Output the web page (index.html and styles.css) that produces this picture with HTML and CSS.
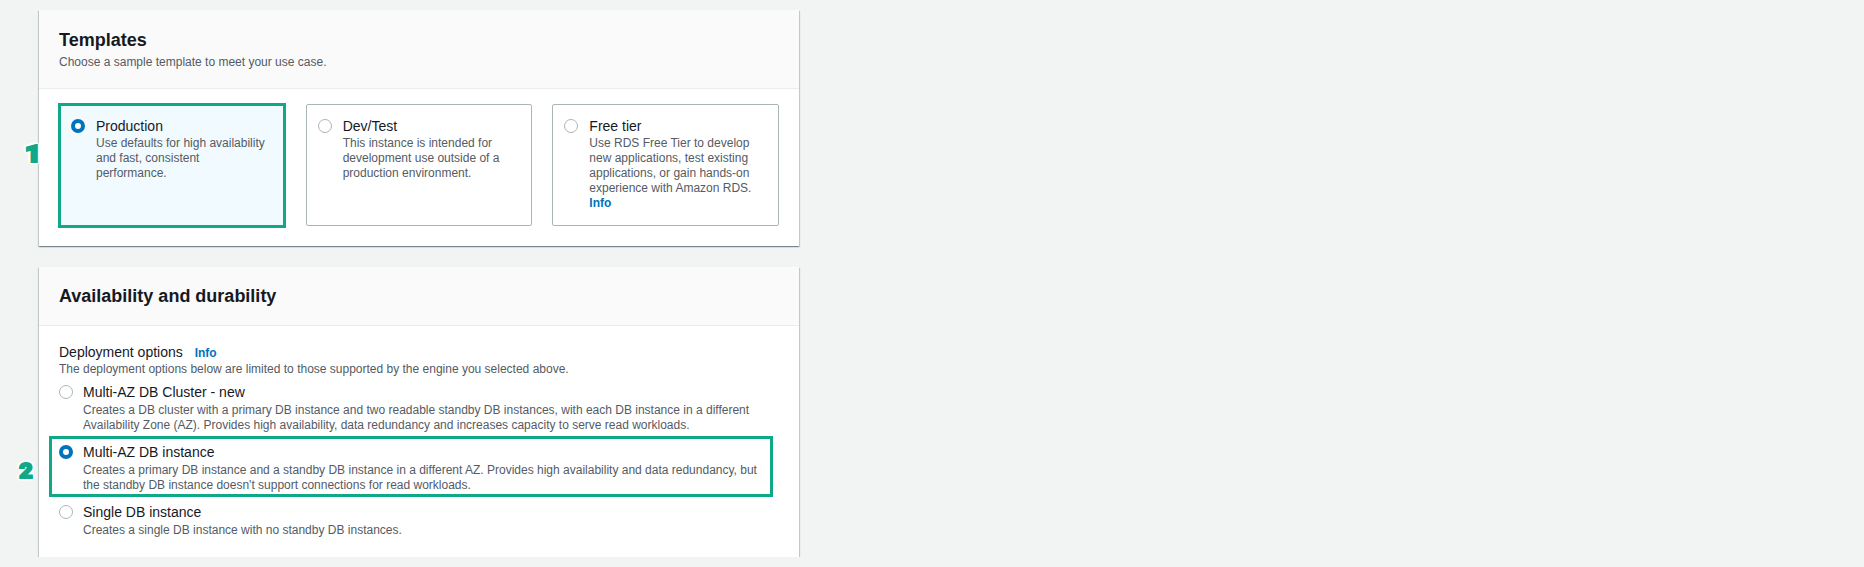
FILE: index.html
```html
<!DOCTYPE html>
<html lang="en">
<head>
<meta charset="utf-8">
<title>Templates</title>
<link rel="stylesheet" href="styles.css">
</head>
<body>
<main class="page">
  <section class="panel">
    <header class="panel-head">
      <h2 class="panel-title">Templates</h2>
      <p class="panel-sub">Choose a sample template to meet your use case.</p>
    </header>
    <div class="panel-body tiles-body">
      <div class="tiles">
        <div class="tile selected">
          <span class="radio on"></span>
          <div class="tile-text">
            <div class="label">Production</div>
            <div class="desc">Use defaults for high availability and fast, consistent performance.</div>
          </div>
          <span class="mark mark-1"><span class="badge badge-1">1</span></span>
        </div>
        <div class="tile">
          <span class="radio"></span>
          <div class="tile-text">
            <div class="label">Dev/Test</div>
            <div class="desc">This instance is intended for development use outside of a production environment.</div>
          </div>
        </div>
        <div class="tile">
          <span class="radio"></span>
          <div class="tile-text">
            <div class="label">Free tier</div>
            <div class="desc">Use RDS Free Tier to develop new applications, test existing applications, or gain hands-on experience with Amazon RDS.</div>
            <a class="info" href="#">Info</a>
          </div>
        </div>
      </div>
    </div>
  </section>

  <section class="panel">
    <header class="panel-head compact">
      <h2 class="panel-title">Availability and durability</h2>
    </header>
    <div class="panel-body options-body">
      <div class="field-label">Deployment options <a class="info inline" href="#">Info</a></div>
      <div class="field-desc">The deployment options below are limited to those supported by the engine you selected above.</div>
      <div class="options">
        <div class="option">
          <span class="radio"></span>
          <div class="opt-text">
            <div class="label">Multi-AZ DB Cluster - new</div>
            <div class="desc">Creates a DB cluster with a primary DB instance and two readable standby DB instances, with each DB instance in a different Availability Zone (AZ). Provides high availability, data redundancy and increases capacity to serve read workloads.</div>
          </div>
        </div>
        <div class="option">
          <span class="radio on"></span>
          <div class="opt-text">
            <div class="label">Multi-AZ DB instance</div>
            <div class="desc">Creates a primary DB instance and a standby DB instance in a different AZ. Provides high availability and data redundancy, but the standby DB instance doesn't support connections for read workloads.</div>
          </div>
          <span class="mark mark-2"><span class="badge badge-2">2</span></span>
        </div>
        <div class="option">
          <span class="radio"></span>
          <div class="opt-text">
            <div class="label">Single DB instance</div>
            <div class="desc">Creates a single DB instance with no standby DB instances.</div>
          </div>
        </div>
      </div>
    </div>
  </section>
</main>
</body>
</html>
```

FILE: styles.css
```css
* { box-sizing: border-box; }

html, body {
  margin: 0;
  padding: 0;
  background: #f2f3f3;
  font-family: "Liberation Sans", Arial, sans-serif;
  color: #16191f;
}

.page {
  display: flex;
  flex-direction: column;
  gap: 21px;
  width: 799px;
  padding: 10px 0 0 39px;
}

.panel {
  background: #ffffff;
  box-shadow: 0 1px 1px 0 rgba(0, 28, 36, 0.3), 1px 1px 1px 0 rgba(0, 28, 36, 0.15), -1px 1px 1px 0 rgba(0, 28, 36, 0.15);
}

.panel-head {
  background: #fafafa;
  border-bottom: 1px solid #eaeded;
  padding: 19px 20px 18px;
}

.panel-head.compact {
  padding: 18px 20px 18px;
}

.panel-title {
  margin: 0;
  font-size: 18px;
  line-height: 22px;
  font-weight: 700;
  color: #16191f;
}

.panel-sub {
  margin: 3px 0 0;
  font-size: 12px;
  line-height: 16px;
  color: #545b64;
}

.tiles-body {
  padding: 15px 20px 20px;
}

.tiles {
  display: grid;
  grid-template-columns: repeat(3, 1fr);
  gap: 20px;
}

.tile {
  position: relative;
  display: flex;
  align-items: flex-start;
  gap: 11px;
  border: 1px solid #aab7b8;
  border-radius: 2px;
  padding: 11px 13px 14px 11px;
  min-height: 122px;
  background: #ffffff;
}

.tile.selected {
  background: #f1faff;
  border-color: #00a1c9;
}

.radio {
  flex: 0 0 auto;
  width: 14px;
  height: 14px;
  margin-top: 3px;
  border-radius: 50%;
  border: 1.5px solid #aab7b8;
  background: #ffffff;
}

.radio.on {
  border: 4px solid #0073bb;
}

.label {
  font-size: 14px;
  line-height: 20px;
  color: #16191f;
}

.desc {
  font-size: 12px;
  line-height: 15px;
  color: #545b64;
}

.opt-text .label {
  margin-bottom: 1px;
}

.info {
  display: block;
  font-size: 12px;
  line-height: 15px;
  font-weight: 700;
  color: #0073bb;
  text-decoration: none;
}

.info.inline {
  display: inline;
  margin-left: 8px;
}

.options-body {
  padding: 16px 20px 19px;
}

.field-label {
  font-size: 14px;
  line-height: 20px;
  color: #16191f;
}

.field-desc {
  font-size: 12px;
  line-height: 15px;
  color: #545b64;
}

.options {
  display: flex;
  flex-direction: column;
  gap: 9px;
  margin-top: 5px;
}

.option {
  position: relative;
  display: flex;
  align-items: flex-start;
  gap: 10px;
}

.opt-text {
  max-width: 684px;
}

.mark {
  position: absolute;
  border: 3px solid #0fa98a;
  pointer-events: none;
}

.mark-1 {
  top: -2px;
  left: -2px;
  right: -1px;
  bottom: -3px;
}

.mark-2 {
  top: -6px;
  left: -10px;
  right: 6px;
  height: 61px;
}

.badge {
  position: absolute;
  display: block;
  text-align: center;
  font-family: Roboto, "Liberation Sans", Arial, sans-serif;
  font-weight: 900;
  color: #0fa98a;
  -webkit-text-stroke: 2px #0fa98a;
  text-shadow:
    3px 0 0 #fff, -3px 0 0 #fff, 0 3px 0 #fff, 0 -3px 0 #fff,
    2.1px 2.1px 0 #fff, -2.1px 2.1px 0 #fff, 2.1px -2.1px 0 #fff, -2.1px -2.1px 0 #fff;
}

.badge-1 {
  width: 20px;
  left: -38px;
  top: 37px;
  font-size: 23px;
  line-height: 23px;
  transform: scaleX(1.25);
}

.badge-2 {
  width: 18px;
  left: -35px;
  top: 22px;
  font-size: 21px;
  line-height: 21px;
  transform: scaleX(1.1);
}
```
